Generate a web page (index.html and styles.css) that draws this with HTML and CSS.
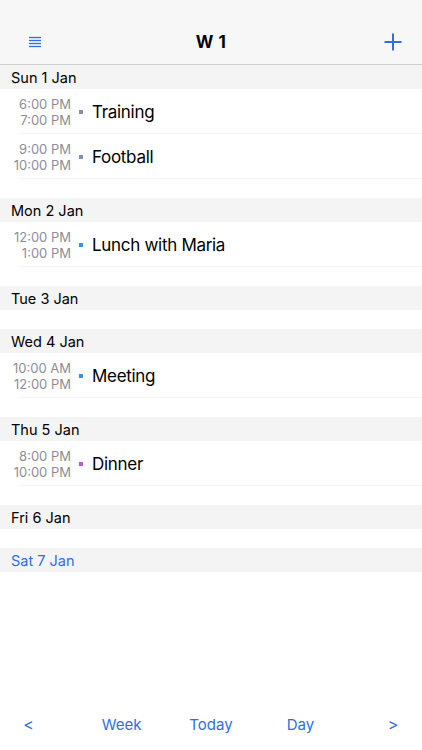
FILE: index.html
```html
<!DOCTYPE html>
<html>
<head>
<meta charset="utf-8">
<link rel="stylesheet" href="styles.css">
</head>
<body>
<div class="app">
  <header class="nav">
    <div class="nav-btn left">
      <svg width="14" height="12" viewBox="0 0 14 12"><g stroke="#2f6fe0" stroke-width="1.3"><line x1="1" y1="1.5" x2="13" y2="1.5"/><line x1="1" y1="4.5" x2="13" y2="4.5"/><line x1="1" y1="7.5" x2="13" y2="7.5"/><line x1="1" y1="10.5" x2="13" y2="10.5"/></g></svg>
    </div>
    <div class="nav-title">W 1</div>
    <div class="nav-btn right">
      <svg width="18" height="18" viewBox="0 0 18 18"><g stroke="#2f6fe0" stroke-width="2"><line x1="9" y1="0.5" x2="9" y2="17.5"/><line x1="0.5" y1="9" x2="17.5" y2="9"/></g></svg>
    </div>
  </header>
  <main class="list">
    <section class="day">
      <div class="day-head">Sun 1 Jan</div>
      <div class="event"><div class="times"><span>6:00 PM</span><span>7:00 PM</span></div><i class="dot gray"></i><div class="title">Training</div></div>
      <div class="event"><div class="times"><span>9:00 PM</span><span>10:00 PM</span></div><i class="dot gray"></i><div class="title">Football</div></div>
    </section>
    <section class="day">
      <div class="day-head">Mon 2 Jan</div>
      <div class="event"><div class="times"><span>12:00 PM</span><span>1:00 PM</span></div><i class="dot blue"></i><div class="title">Lunch with Maria</div></div>
    </section>
    <section class="day">
      <div class="day-head">Tue 3 Jan</div>
    </section>
    <section class="day">
      <div class="day-head">Wed 4 Jan</div>
      <div class="event"><div class="times"><span>10:00 AM</span><span>12:00 PM</span></div><i class="dot blue"></i><div class="title">Meeting</div></div>
    </section>
    <section class="day">
      <div class="day-head">Thu 5 Jan</div>
      <div class="event"><div class="times"><span>8:00 PM</span><span>10:00 PM</span></div><i class="dot purple"></i><div class="title">Dinner</div></div>
    </section>
    <section class="day">
      <div class="day-head">Fri 6 Jan</div>
    </section>
    <section class="day">
      <div class="day-head today">Sat 7 Jan</div>
    </section>
  </main>
  <footer class="toolbar">
    <span class="tb arrow">&lt;</span>
    <span class="tb">Week</span>
    <span class="tb">Today</span>
    <span class="tb">Day</span>
    <span class="tb arrow">&gt;</span>
  </footer>
</div>
</body>
</html>
```

FILE: styles.css
```css
* { box-sizing: border-box; margin: 0; padding: 0; }
html, body { width: 422px; height: 750px; background: #fff; }
body { font-family: "Inter", "Liberation Sans", sans-serif; color: #000; overflow: hidden; }
.app { display: flex; flex-direction: column; height: 750px; }
.nav {
  height: 65px;
  padding-top: 20px;
  background: #f7f7f7;
  border-bottom: 1px solid #cfcfd2;
  display: flex;
  align-items: center;
  justify-content: space-between;
}
.nav-btn { width: 60px; display: flex; align-items: center; }
.nav-btn.left { padding-left: 28px; }
.nav-btn.right { justify-content: flex-end; padding-right: 20px; }
.nav-title { font-size: 17px; font-weight: 700; letter-spacing: 0.5px; }
.list { flex: 1; }
.day { padding-bottom: 19px; }
.day-head {
  height: 24px;
  background: #f4f4f4;
  font-size: 14.5px;
  line-height: 24px;
  padding-top: 1px;
  padding-left: 11px;
}
.day-head.today { color: #2f6fe0; }
.event {
  height: 45px;
  display: flex;
  align-items: center;
  margin-left: 20px;
  padding-top: 2px;
  border-bottom: 1px solid #f2f2f4;
}
.times {
  width: 51px;
  flex-shrink: 0;
  display: flex;
  flex-direction: column;
  align-items: flex-end;
  font-size: 13px;
  line-height: 16px;
  color: #8e8e93;
  white-space: nowrap;
}
.dot { width: 4px; height: 4px; margin-left: 8px; margin-right: 9px; display: block; flex-shrink: 0; }
.dot.gray { background: #8390a6; }
.dot.blue { background: #3596e8; }
.dot.purple { background: #bd55d8; }
.title { font-size: 17px; letter-spacing: -0.3px; }
.toolbar {
  height: 48px;
  display: flex;
  align-items: center;
  color: #2f6fe0;
  font-size: 15px;
  padding-bottom: 4px;
}
.tb { text-align: center; flex-shrink: 0; }
.toolbar .tb:nth-child(1) { width: 57px; }
.toolbar .tb:nth-child(2) { width: 129px; }
.toolbar .tb:nth-child(3) { width: 50px; }
.toolbar .tb:nth-child(4) { width: 129px; }
.toolbar .tb:nth-child(5) { width: 56px; }
.arrow { font-size: 16px; }
```
